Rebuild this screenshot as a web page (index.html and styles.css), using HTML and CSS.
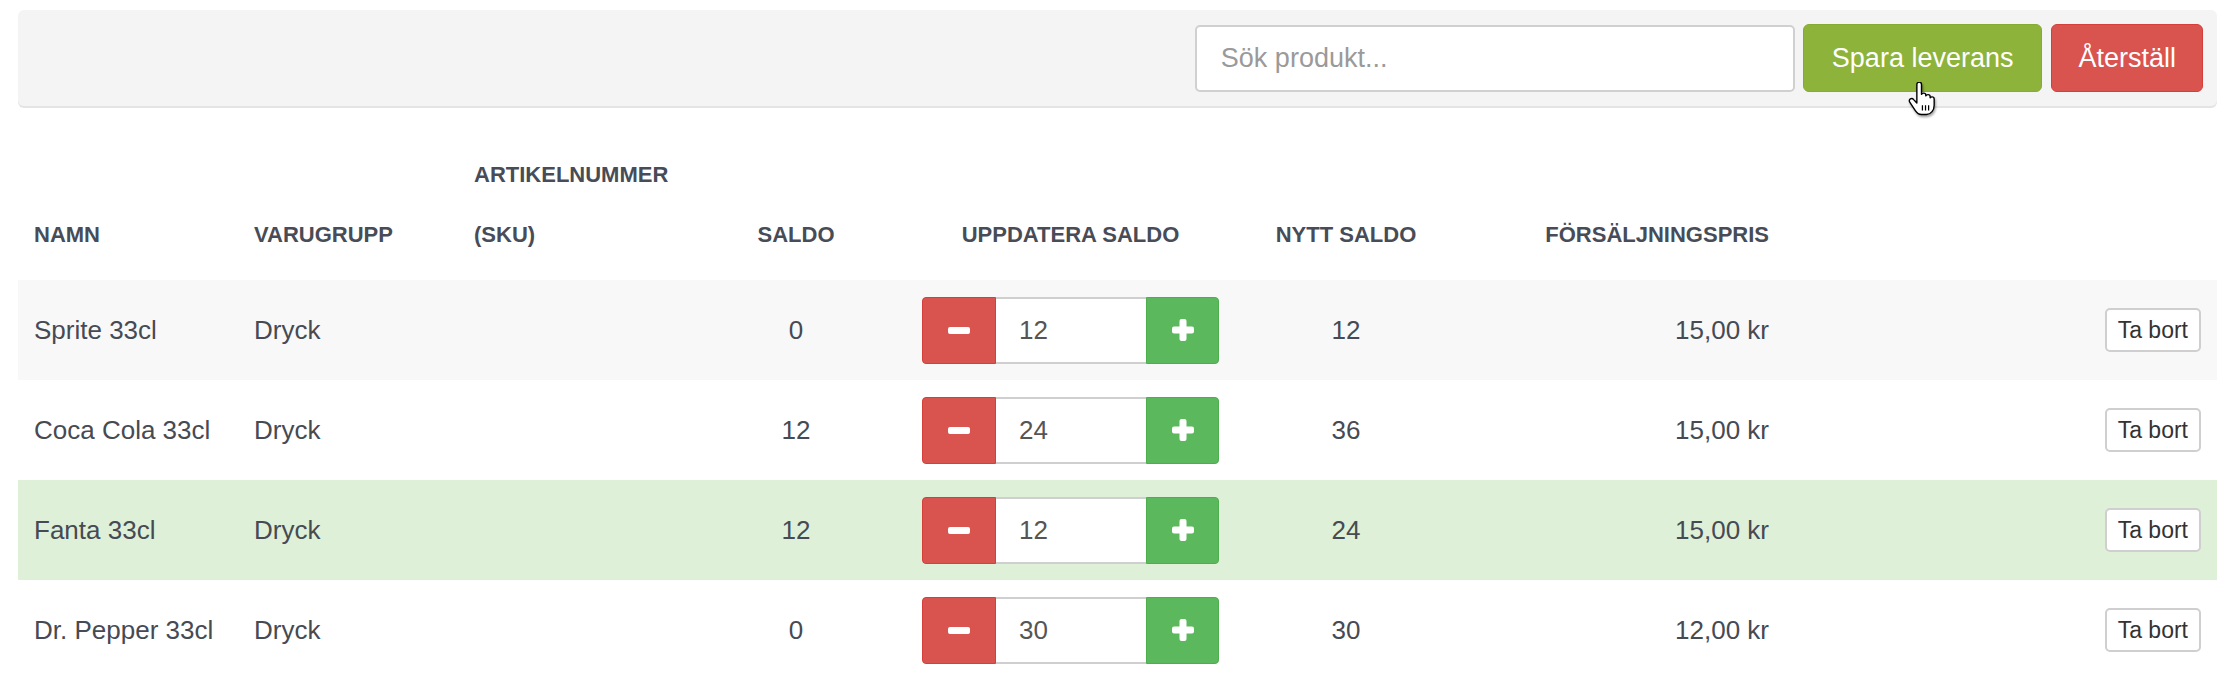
FILE: index.html
```html
<!DOCTYPE html>
<html lang="sv">
<head>
  <meta charset="UTF-8">
  <title>Leverans</title>
  <link rel="stylesheet" href="styles.css">
</head>
<body>
  <div class="page">
    <div class="toolbar">
      <input class="search" type="text" placeholder="Sök produkt...">
      <button class="btn btn-save">Spara leverans</button>
      <button class="btn btn-reset">Återställ</button>
    </div>

    <!-- mouse pointer over the save button -->
    <svg class="cursor" width="31" height="34" viewBox="0 0 20 22">
      <path d="M7 1.6c0-.9.6-1.5 1.5-1.5s1.5.6 1.5 1.5V8c.3-.5.8-.8 1.4-.8.8 0 1.4.6 1.4 1.4V9c.3-.5.8-.8 1.4-.8.8 0 1.4.6 1.4 1.4v.6c.3-.4.7-.6 1.2-.6.8 0 1.4.6 1.4 1.4V15c0 3.2-2 6-5 6h-3.2c-2 0-3-1-4-2.5L2.4 13c-.5-.8-.3-1.7.4-2.1.7-.4 1.6-.2 2.1.5L7 13.6Z" fill="#fff" stroke="#000" stroke-width="0.9" stroke-linejoin="round"/>
      <path d="M10.6 15v3.4M12.6 15v3.4M14.6 15v3.4" stroke="#000" stroke-width="0.8"/>
    </svg>

    <table class="stock">
      <colgroup>
        <col style="width:220px">
        <col style="width:220px">
        <col style="width:242px">
        <col style="width:192px">
        <col style="width:357px">
        <col style="width:194px">
        <col style="width:342px">
        <col style="width:432px">
      </colgroup>
      <thead>
        <tr>
          <th>Namn</th>
          <th>Varugrupp</th>
          <th>Artikelnummer<br>(SKU)</th>
          <th class="center">Saldo</th>
          <th class="center">Uppdatera saldo</th>
          <th class="center">Nytt saldo</th>
          <th class="right">Försäljningspris</th>
          <th></th>
        </tr>
      </thead>
      <tbody>
        <tr class="striped">
          <td>Sprite 33cl</td>
          <td>Dryck</td>
          <td></td>
          <td class="center">0</td>
          <td class="center">
            <div class="stepper">
              <button class="step minus"><svg width="22" height="7" viewBox="0 0 22 7"><rect width="22" height="7" rx="2" fill="#fff"/></svg></button>
              <input class="qty" type="text" value="12">
              <button class="step plus"><svg width="22" height="22" viewBox="0 0 22 22"><rect y="7.5" width="22" height="7" rx="2" fill="#fff"/><rect x="7.5" width="7" height="22" rx="2" fill="#fff"/></svg></button>
            </div>
          </td>
          <td class="center">12</td>
          <td class="right">15,00 kr</td>
          <td class="right"><button class="remove">Ta bort</button></td>
        </tr>
        <tr>
          <td>Coca Cola 33cl</td>
          <td>Dryck</td>
          <td></td>
          <td class="center">12</td>
          <td class="center">
            <div class="stepper">
              <button class="step minus"><svg width="22" height="7" viewBox="0 0 22 7"><rect width="22" height="7" rx="2" fill="#fff"/></svg></button>
              <input class="qty" type="text" value="24">
              <button class="step plus"><svg width="22" height="22" viewBox="0 0 22 22"><rect y="7.5" width="22" height="7" rx="2" fill="#fff"/><rect x="7.5" width="7" height="22" rx="2" fill="#fff"/></svg></button>
            </div>
          </td>
          <td class="center">36</td>
          <td class="right">15,00 kr</td>
          <td class="right"><button class="remove">Ta bort</button></td>
        </tr>
        <tr class="success">
          <td>Fanta 33cl</td>
          <td>Dryck</td>
          <td></td>
          <td class="center">12</td>
          <td class="center">
            <div class="stepper">
              <button class="step minus"><svg width="22" height="7" viewBox="0 0 22 7"><rect width="22" height="7" rx="2" fill="#fff"/></svg></button>
              <input class="qty" type="text" value="12">
              <button class="step plus"><svg width="22" height="22" viewBox="0 0 22 22"><rect y="7.5" width="22" height="7" rx="2" fill="#fff"/><rect x="7.5" width="7" height="22" rx="2" fill="#fff"/></svg></button>
            </div>
          </td>
          <td class="center">24</td>
          <td class="right">15,00 kr</td>
          <td class="right"><button class="remove">Ta bort</button></td>
        </tr>
        <tr>
          <td>Dr. Pepper 33cl</td>
          <td>Dryck</td>
          <td></td>
          <td class="center">0</td>
          <td class="center">
            <div class="stepper">
              <button class="step minus"><svg width="22" height="7" viewBox="0 0 22 7"><rect width="22" height="7" rx="2" fill="#fff"/></svg></button>
              <input class="qty" type="text" value="30">
              <button class="step plus"><svg width="22" height="22" viewBox="0 0 22 22"><rect y="7.5" width="22" height="7" rx="2" fill="#fff"/><rect x="7.5" width="7" height="22" rx="2" fill="#fff"/></svg></button>
            </div>
          </td>
          <td class="center">30</td>
          <td class="right">12,00 kr</td>
          <td class="right"><button class="remove">Ta bort</button></td>
        </tr>
      </tbody>
    </table>
  </div>
</body>
</html>
```

FILE: styles.css
```css
body {
  margin: 0;
  font-family: "Liberation Sans", Arial, sans-serif;
  color: #464a53;
  background: #fff;
}
.page {
  position: relative;
  padding: 10px 17px 0 18px;
}

/* Top toolbar */
.toolbar {
  display: flex;
  justify-content: flex-end;
  align-items: center;
  gap: 8px;
  height: 68px;
  padding: 14px;
  background: #f4f4f4;
  border-radius: 6px;
  box-shadow: 0 2px 0 #e4e4e4;
}
.search {
  box-sizing: border-box;
  width: 600px;
  height: 67px;
  padding: 0 24px;
  border: 2px solid #d0d0d0;
  border-radius: 5px;
  font-family: inherit;
  font-size: 27px;
  color: #555;
  background: #fff;
}
.search::placeholder {
  color: #9a9a9a;
}
.btn {
  height: 68px;
  padding: 0 26px;
  border: 1px solid transparent;
  border-radius: 6px;
  font-family: inherit;
  font-size: 27px;
  color: #fff;
}
.btn-save {
  padding: 0 28px;
  background: #8db33a;
  border-color: #86ab35;
}
.btn-reset {
  margin-left: 1px;
  background: #d9534f;
  border-color: #d43f3a;
}
.cursor {
  position: absolute;
  left: 1906px;
  top: 82px;
  filter: drop-shadow(1px 2px 1px rgba(0, 0, 0, 0.35));
}

/* Stock table */
.stock {
  width: 100%;
  margin-top: 24px;
  border-collapse: collapse;
  table-layout: fixed;
}
.stock th {
  padding: 15px 16px;
  line-height: 60px;
  vertical-align: bottom;
  text-align: left;
  text-transform: uppercase;
  font-size: 22px;
  font-weight: bold;
  color: #474c57;
}
.stock td {
  height: 100px;
  padding: 0 16px;
  vertical-align: middle;
  font-size: 26px;
}
.stock .center {
  text-align: center;
}
.stock .right {
  text-align: right;
}
.stock tr.striped td {
  background: #f8f8f8;
}
.stock tr.success td {
  background: #dff0d8;
}

/* Quantity stepper */
.stepper {
  display: inline-flex;
  height: 67px;
  vertical-align: middle;
}
.step {
  display: flex;
  align-items: center;
  justify-content: center;
  height: 67px;
  padding: 0;
  border: 1px solid;
}
.minus {
  width: 74px;
  background: #d9534f;
  border-color: #d43f3a;
  border-radius: 4px 0 0 4px;
}
.plus {
  width: 73px;
  background: #5cb85c;
  border-color: #4cae4c;
  border-radius: 0 4px 4px 0;
}
.qty {
  box-sizing: border-box;
  width: 150px;
  height: 67px;
  padding: 0 23px;
  border: 2px solid #cfcfcf;
  border-left: none;
  border-right: none;
  font-family: inherit;
  font-size: 26px;
  color: #555;
  text-align: left;
}
.remove {
  height: 44px;
  padding: 0 11px;
  border: 2px solid #cfcfcf;
  border-radius: 5px;
  background: #fff;
  font-family: inherit;
  font-size: 23px;
  color: #333;
}
```
